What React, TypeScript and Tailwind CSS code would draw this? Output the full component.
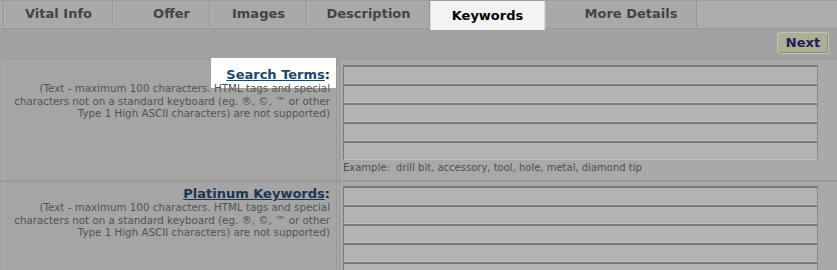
import React from "react";

const help = [
  "(Text - maximum 100 characters. HTML tags and special",
  "characters not on a standard keyboard (eg. ®, ©, ™ or other",
  "Type 1 High ASCII characters) are not supported)",
];

function Inputs({ n }: { n: number }) {
  return (
    <div className="flex flex-col w-[475px]">
      {Array.from({ length: n }).map((_, i) => (
        <div
          key={i}
          className="h-[19px] bg-[#b3b3b3] border-t-2 border-l border-t-[#7a7a7a] border-l-[#7a7a7a] border-b border-b-[#c2c2c2] border-r border-r-[#8a8a8a]"
        />
      ))}
    </div>
  );
}

function Tab({ label, w, pl = 0, active = false }: { label: string; w: number; pl?: number; active?: boolean }) {
  return (
    <div
      style={{ width: w, paddingLeft: pl }}
      className={
        active
          ? "h-[29px] bg-[#f3f3f3] text-black flex items-center justify-center text-[13px] font-bold z-10 border-x border-[#dcdcdc]"
          : "h-[26px] bg-[#a9a9a9] text-[#444] flex items-center justify-center text-[13px] font-bold border-r border-r-[#969696] border-l border-l-[#b4b4b4]"
      }
    >
      {label}
    </div>
  );
}

export default function App() {
  return (
    <div
      className="w-[837px] h-[270px] overflow-hidden bg-[#a5a5a5] relative"
      style={{ fontFamily: '"DejaVu Sans", Verdana, sans-serif' }}
    >
      {/* tab bar */}
      <div className="flex h-[28px] bg-[#acacac] border-t border-[#9c9c9c] items-start">
        <div className="w-[4px] h-[26px] bg-[#a9a9a9] border-r border-[#969696]" />
        <Tab label="Vital Info" w={109} />
        <Tab label="Offer" w={97} pl={20} />
        <Tab label="Images" w={97} />
        <Tab label="Description" w={123} />
        <Tab label="Keywords" w={115} active />
        <Tab label="More Details" w={152} pl={20} />
        <div className="flex-1 h-[26px] bg-[#adadad]" />
      </div>
      {/* button bar */}
      <div className="h-[31px] bg-[#a2a2a2] border-t border-[#999] flex items-start justify-end pr-[8px] pt-[3px]">
        <div className="h-[22px] w-[52px] rounded-[3px] border border-[#c4c4ae] bg-[#adad98] shadow-[inset_-1px_-1px_0_#8c8c78] flex items-center justify-center text-[13px] font-bold text-[#1c1c52]">
          Next
        </div>
      </div>
      {/* row 1 */}
      <div className="flex border-t border-[#9a9a9a] h-[121px]">
        <div className="w-[336px] pl-[4px] flex">
          <div className="flex-1 border-l border-[#b0b0b0] bg-[#a5a5a5] relative pr-[6px] pt-[6px] flex flex-col items-end">
            <div className="absolute left-[206px] top-[-2px] w-[125px] h-[30px] bg-white" />
            <div className="relative text-[13px] font-bold text-[#19486f] h-[17px] leading-[17px]">
              <span className="underline">Search Terms</span>
              <span className="text-[#222]">:</span>
            </div>
            <div className="relative text-right text-[10.3px] leading-[12.5px] text-[#525252] -mt-[1px]">
              {help.map((l) => (
                <div key={l}>{l}</div>
              ))}
            </div>
          </div>
        </div>
        <div className="flex-1 bg-[#a9a9a9] border-l-4 border-double border-[#979797] pl-[3px] pt-[5px]">
          <Inputs n={5} />
          <div className="text-[10px] leading-[13px] text-[#4e4e4e] mt-[1px]">
            Example:&nbsp; drill bit, accessory, tool, hole, metal, diamond tip
          </div>
        </div>
      </div>
      {/* row 2 */}
      <div className="flex border-t-2 border-[#999] h-[100px]">
        <div className="w-[336px] pl-[4px] flex">
          <div className="flex-1 border-l border-[#b0b0b0] bg-[#a5a5a5] pr-[6px] pt-[3px] flex flex-col items-end">
            <div className="text-[13px] font-bold text-[#1b3553] h-[17px] leading-[17px]">
              <span className="underline">Platinum Keywords</span>
              <span className="text-[#222]">:</span>
            </div>
            <div className="text-right text-[10.3px] leading-[12.5px] text-[#525252] -mt-[1px]">
              {help.map((l) => (
                <div key={l}>{l}</div>
              ))}
            </div>
          </div>
        </div>
        <div className="flex-1 bg-[#a9a9a9] border-l-4 border-double border-[#979797] pl-[3px] pt-[4px]">
          <Inputs n={5} />
        </div>
      </div>
    </div>
  );
}
